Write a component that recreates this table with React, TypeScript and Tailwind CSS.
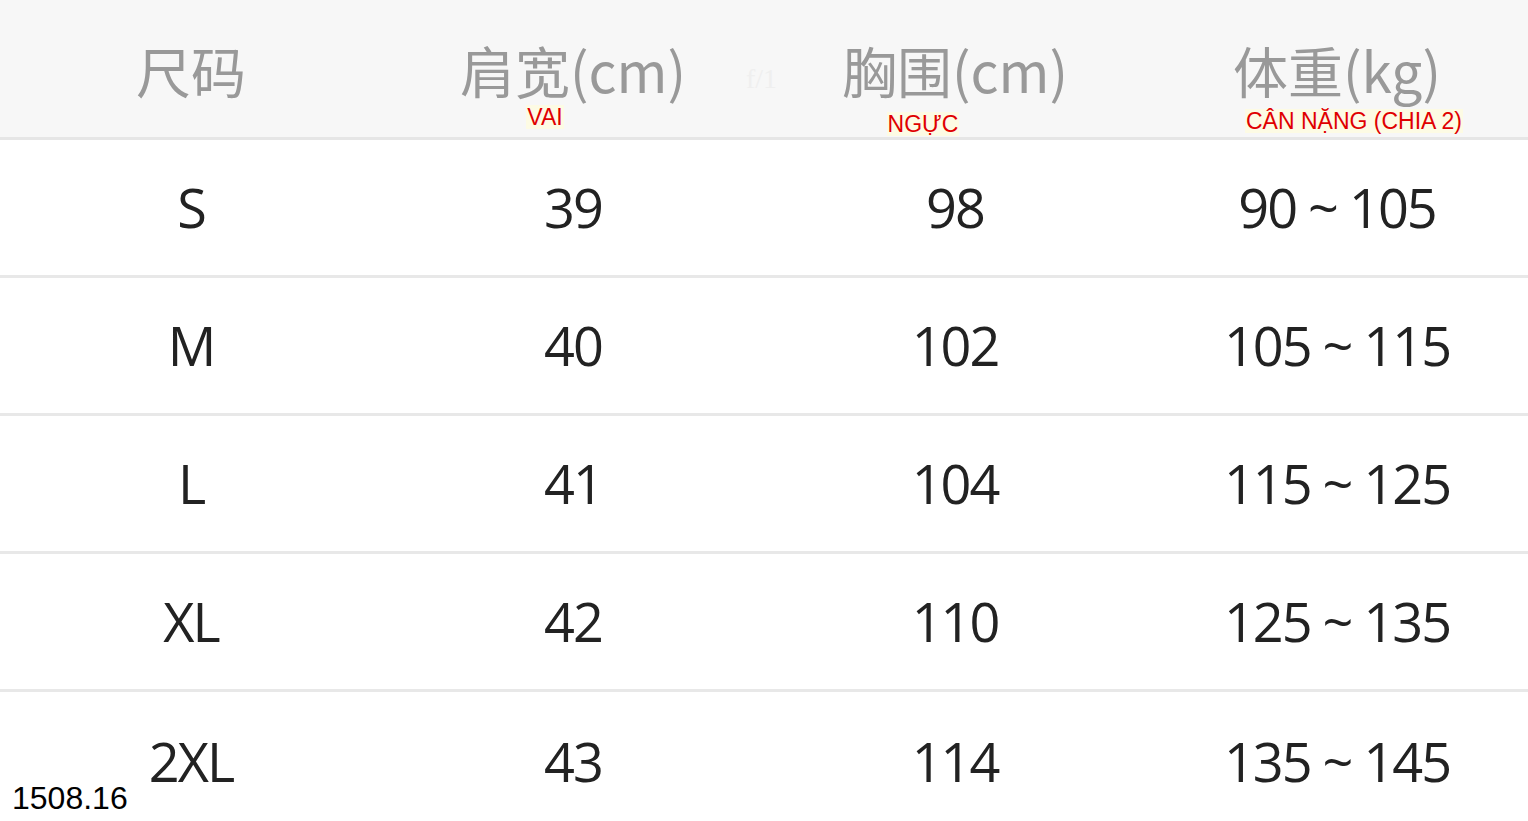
const rows = [
  ["S", "39", "98", "90 ~ 105"],
  ["M", "40", "102", "105 ~ 115"],
  ["L", "41", "104", "115 ~ 125"],
  ["XL", "42", "110", "125 ~ 135"],
  ["2XL", "43", "114", "135 ~ 145"],
];

const headers = [
  { label: "尺码", note: "", shift: "" },
  { label: "肩宽(cm)", note: "VAI", shift: "-translate-x-[28px] translate-y-[3px]" },
  { label: "胸围(cm)", note: "NGỰC", shift: "-translate-x-[32px] translate-y-[10px]" },
  { label: "体重(kg)", note: "CÂN NẶNG (CHIA 2)", shift: "translate-x-[17px] translate-y-[7px]" },
];

export default function App() {
  return (
    <div className="relative w-[1528px] h-[821px] overflow-hidden bg-white font-['Open_Sans','Noto_Sans_CJK_SC',sans-serif]">
      {/* header */}
      <div className="grid grid-cols-4 h-[140px] bg-[#f7f7f7] border-b-[3px] border-[#e6e6e6]">
        {headers.map((h) => (
          <div key={h.label} className="flex flex-col items-center pt-[43px]">
            <div className="text-[55px] leading-[52px] text-[#999] font-['Noto_Sans_CJK_SC',sans-serif]">
              {h.label}
            </div>
            {h.note && (
              <div
                className={`mt-[7px] px-[1px] bg-[#fdfbe4] text-[#e00000] text-[23px] leading-[24px] font-['Liberation_Sans_Narrow','Liberation_Sans',sans-serif] ${h.shift}`}
              >
                {h.note}
              </div>
            )}
          </div>
        ))}
      </div>

      {/* body */}
      {rows.map((r, i) => (
        <div
          key={r[0]}
          className={`grid grid-cols-4 h-[138px] ${i < rows.length - 1 ? "border-b-[3px] border-[#e8e8e8]" : ""}`}
        >
          {r.map((c, j) => (
            <div key={j} className="flex items-center justify-center text-[54px] text-[#222] tracking-[-2px]">
              {c}
            </div>
          ))}
        </div>
      ))}

      {/* faint watermark */}
      <div className="absolute left-[746px] top-[58px] text-[28px] text-[#efefef] font-['Liberation_Serif',serif]">f/1</div>

      {/* stamp in the corner */}
      <div className="absolute left-[12px] top-[780px] text-[32px] leading-[36px] text-black font-['Liberation_Sans',sans-serif]">
        1508.16
      </div>
    </div>
  );
}
